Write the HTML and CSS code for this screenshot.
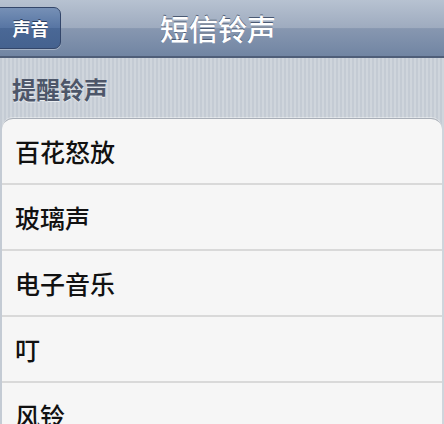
FILE: index.html
```html
<!DOCTYPE html>
<html lang="zh-CN">
<head>
<meta charset="utf-8">
<link rel="stylesheet" href="styles.css">
</head>
<body>
<div class="screen">
  <div class="nav">
    <div class="nav-left"><span class="back">声音</span></div>
    <div class="title">短信铃声</div>
    <div class="nav-right"></div>
  </div>
  <div class="section">提醒铃声</div>
  <div class="list">
    <div class="row">百花怒放</div>
    <div class="row">玻璃声</div>
    <div class="row">电子音乐</div>
    <div class="row">叮</div>
    <div class="row">风铃</div>
  </div>
</div>
</body>
</html>
```
FILE: styles.css
```css
html, body {
  margin: 0;
  padding: 0;
}
body {
  width: 444px;
  height: 424px;
  overflow: hidden;
  font-family: "Noto Sans CJK SC", "Noto Sans", sans-serif;
}
.screen {
  width: 444px;
  height: 424px;
  overflow: hidden;
  background: repeating-linear-gradient(90deg, #c4cbd4 0px, #c4cbd4 2px, #cfd5dc 2px, #cfd5dc 4px);
}
.nav {
  height: 56px;
  border-bottom: 2px solid #4f5e78;
  background: linear-gradient(#b7c2d1 0%, #9eabbf 50%, #8797b0 51%, #7185a3 100%);
  display: grid;
  grid-template-columns: 1fr auto 1fr;
  align-items: center;
}
.nav-left {
  display: flex;
  align-items: center;
}
.back {
  margin-left: -8px;
  height: 42px;
  width: 69px;
  box-sizing: border-box;
  padding-left: 8px;
  display: flex;
  align-items: center;
  justify-content: center;
  border: 1px solid #33466a;
  border-radius: 7px;
  background: linear-gradient(#7690b6 0%, #5775a3 50%, #4a6896 51%, #45628f 100%);
  color: #fff;
  font-size: 18px;
  font-weight: 700;
  text-shadow: 0 -1px 0 #2c3d5c;
  box-shadow: 0 1px 0 rgba(255,255,255,0.35);
}
.title {
  color: #fff;
  font-size: 29px;
  font-weight: 500;
  text-shadow: 0 -1px 0 #4b5a73;
  margin-right: 8px;
}
.section {
  height: 60px;
  display: flex;
  align-items: center;
  padding-left: 12px;
  font-size: 24px;
  font-weight: 700;
  color: #4d5669;
  text-shadow: 0 1px 0 #e9edf1;
}
.list {
  margin: 0 2px;
  background: #f6f6f6;
  border-top: 1px solid #a8aeb7;
  border-radius: 11px 11px 0 0;
  box-shadow: 0 -1px 0 rgba(255,255,255,0.4);
}
.row {
  height: 64px;
  border-bottom: 2px solid #d9d9d9;
  display: flex;
  align-items: center;
  padding-left: 13px;
  font-size: 25px;
  font-weight: 500;
  color: #111;
}
```
